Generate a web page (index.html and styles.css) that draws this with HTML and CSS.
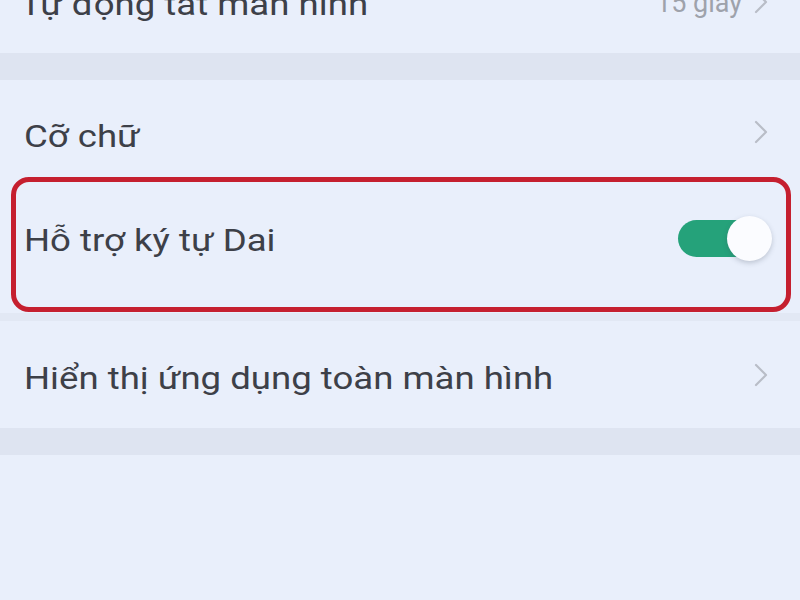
FILE: index.html
```html
<!DOCTYPE html>
<html lang="vi">
<head>
<meta charset="utf-8">
<link rel="stylesheet" href="styles.css">
</head>
<body>
<div class="screen">
  <div class="group">
    <div class="row row-top">
      <span class="label">Tự động tắt màn hình</span>
      <span class="right"><span class="value">15 giây</span><svg class="chev" viewBox="0 0 14 24"><path d="M2 2 L12 12 L2 22"/></svg></span>
    </div>
  </div>
  <div class="band"></div>
  <div class="group group-font">
    <div class="row row-size">
      <span class="label">Cỡ chữ</span>
      <svg class="chev" viewBox="0 0 14 24"><path d="M2 2 L12 12 L2 22"/></svg>
    </div>
    <div class="row row-dai">
      <span class="label">Hỗ trợ ký tự Dai</span>
      <span class="toggle"><span class="knob"></span></span>
    </div>
  </div>
  <div class="band band-thin"></div>
  <div class="group">
    <div class="row row-full">
      <span class="label">Hiển thị ứng dụng toàn màn hình</span>
      <svg class="chev" viewBox="0 0 14 24"><path d="M2 2 L12 12 L2 22"/></svg>
    </div>
  </div>
  <div class="band"></div>
  <div class="highlight"></div>
</div>
</body>
</html>
```

FILE: styles.css
```css
* { box-sizing: border-box; }
html, body { margin: 0; padding: 0; }
body {
  width: 800px;
  height: 600px;
  overflow: hidden;
  background: #e9effb;
  font-family: Roboto, "Noto Sans", "Liberation Sans", sans-serif;
  color: #3d4048;
}
.screen {
  position: relative;
  display: flow-root;
  width: 800px;
  height: 600px;
}
.group {
  background: #e9effb;
}
.group-font {
  padding-bottom: 25px;
}
.row {
  display: flex;
  align-items: center;
  justify-content: space-between;
  padding: 0 32px 0 24px;
}
.label {
  position: relative;
  top: 4px;
  display: inline-block;
  font-size: 31px;
  line-height: 1;
  transform: scaleX(1.18);
  transform-origin: left center;
  white-space: nowrap;
}
.row-top {
  height: 103px;
  margin-top: -50px;
  padding-left: 20px;
}
.row-top .label { top: 3px; }
.right {
  display: flex;
  align-items: center;
  gap: 12px;
}
.value {
  position: relative;
  top: 1px;
  font-size: 27px;
  color: #9ea2ab;
}
.row-size { height: 104px; }
.row-dai { height: 104px; padding-right: 30px; }
.row-full { height: 107px; }
.chev {
  width: 14px;
  height: 24px;
  fill: none;
  stroke: #b9bdc7;
  stroke-width: 2.2;
  stroke-linecap: round;
  stroke-linejoin: round;
}
.band {
  height: 27px;
  background: #dee4f1;
}
.band-thin {
  height: 8px;
  background: #e2e8f4;
}
.toggle {
  position: relative;
  width: 92px;
  height: 37px;
  border-radius: 19px;
  background: #25a27a;
  margin-top: 4px;
}
.knob {
  position: absolute;
  right: -2px;
  top: -4px;
  width: 45px;
  height: 45px;
  border-radius: 50%;
  background: #fbfcff;
  box-shadow: 0 2px 5px rgba(60, 70, 90, 0.25);
}
.highlight {
  position: absolute;
  left: 11px;
  top: 177px;
  width: 780px;
  height: 135px;
  border: 5px solid #c51f2f;
  border-radius: 18px;
}
```
